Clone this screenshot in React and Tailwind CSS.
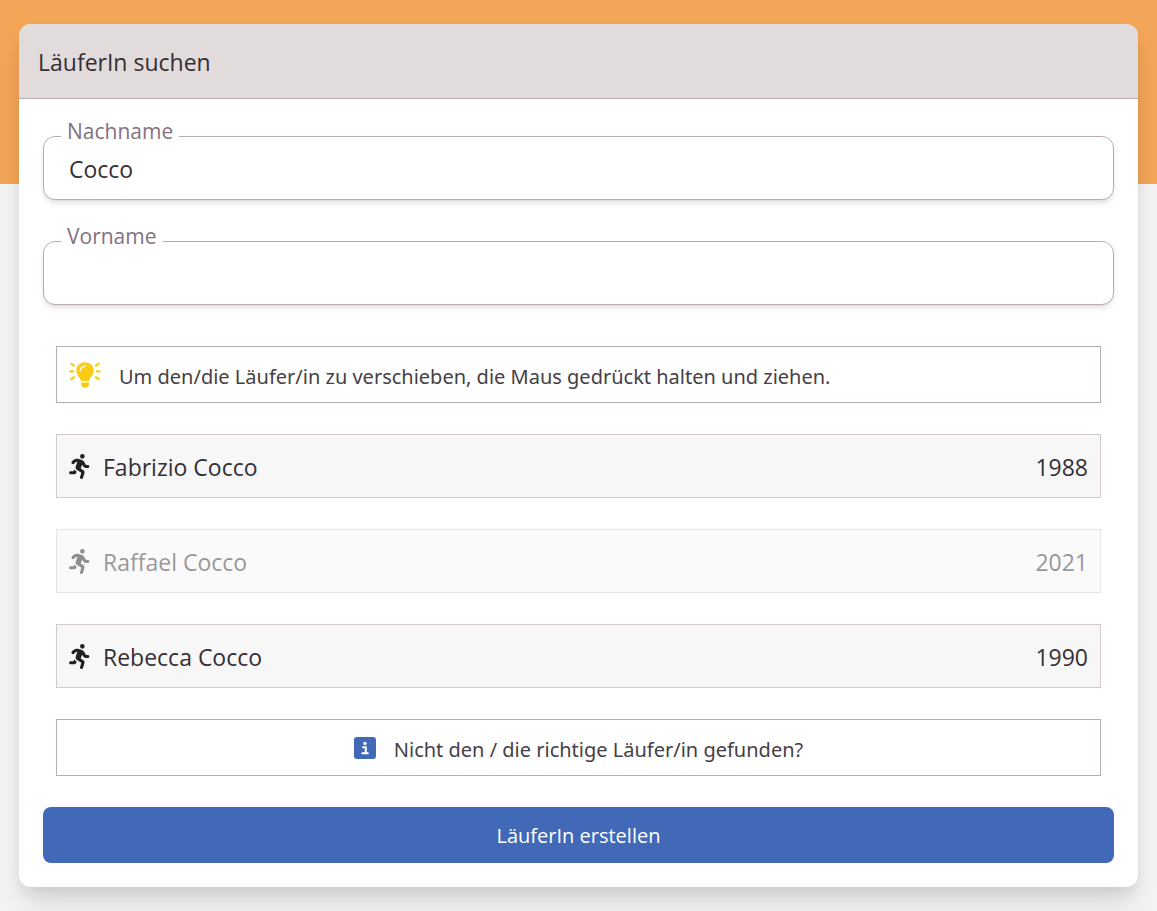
import { useState } from "react";
import { FaPersonRunning } from "react-icons/fa6";

const runners = [
  { name: "Fabrizio Cocco", year: 1988, disabled: false },
  { name: "Raffael Cocco", year: 2021, disabled: true },
  { name: "Rebecca Cocco", year: 1990, disabled: false },
];

function BulbIcon() {
  return (
    <svg viewBox="0 0 640 512" className="h-[26px] w-8 shrink-0" aria-hidden="true">
      <path
        fill="#facc15"
        d="M320 0C217 0 144 76 144 168c0 50 20 88 48 118 22 24 42 60 46 90h164c4-30 24-66 46-90 28-30 48-68 48-118C496 76 423 0 320 0z"
      />
      <path fill="none" stroke="#fff" strokeWidth="30" strokeLinecap="round" d="M226 172c0-52 42-92 94-92" />
      <path fill="#facc15" d="M240 408h160v28c0 44-34 76-80 76s-80-32-80-76z" />
      <path
        fill="none"
        stroke="#facc15"
        strokeWidth="46"
        strokeLinecap="round"
        d="M26 184h58M556 184h58M48 32l52 36M592 32l-52 36M48 336l52-36M592 336l-52-36"
      />
    </svg>
  );
}

function InfoIcon() {
  return (
    <svg viewBox="0 0 22 22" className="size-[22px] shrink-0" aria-hidden="true">
      <rect width="22" height="22" rx="3" fill="#4169b8" />
      <circle cx="11" cy="6.4" r="1.7" fill="#fff" />
      <path fill="none" stroke="#fff" strokeWidth="2" d="M8.2 10.2h3.6v5.6M7.6 16.2h7" />
    </svg>
  );
}

function Field({ id, label, initial }) {
  const [value, setValue] = useState(initial);
  return (
    <div className="relative">
      <input
        id={id}
        value={value}
        onChange={(e) => setValue(e.target.value)}
        className="block h-16 w-full rounded-xl border border-[#b9abb5] bg-white px-[25px] pt-[2px] text-[23px] text-[#352f35] shadow-md outline-none"
      />
      <label
        htmlFor={id}
        className="absolute -top-5 left-[18px] bg-white px-[6px] text-[21px] leading-[30px] text-[#84707f]"
      >
        {label}
      </label>
    </div>
  );
}

function Runner({ name, year, disabled }) {
  return (
    <li
      className={
        "flex h-16 items-center border border-[#d2c8cf] bg-[#f7f7f7] px-3 text-[23px] text-[#352f35]" +
        (disabled ? " opacity-50" : "")
      }
    >
      <FaPersonRunning className="h-[25px] w-[22px] shrink-0 text-[#231f23]" />
      <span className="ml-3 grow pt-[2px]">{name}</span>
      <span className="pt-[2px]">{year}</span>
    </li>
  );
}

export default function App() {
  return (
    <main className="min-h-screen bg-[linear-gradient(#f4a658_184px,#f4f4f4_184px)] px-[19px] py-6 font-['Open_Sans',sans-serif]">
      <section className="overflow-hidden rounded-xl bg-white shadow-[0_20px_30px_-3px_rgba(0,0,0,0.1),0_8px_16px_-4px_rgba(0,0,0,0.1)]">
        <header className="border-b border-[#b9abb5] bg-[#e1dbdb] px-[19px] pt-5 pb-[18px]">
          <h1 className="text-[23px] leading-9 text-[#352f35]">LäuferIn suchen</h1>
        </header>
        <form className="px-6 pt-[37px] pb-6" onSubmit={(e) => e.preventDefault()}>
          <div className="flex flex-col gap-[41px]">
            <Field id="nachname" label="Nachname" initial="Cocco" />
            <Field id="vorname" label="Vorname" initial="" />
          </div>
          <div className="mt-[41px] flex flex-col gap-[31px] px-[13px]">
            <div className="flex h-[57px] items-center gap-[18px] border border-[#b9abb5] px-3">
              <BulbIcon />
              <p className="pt-1 font-['Noto_Sans',sans-serif] text-[20px] text-[#454045]">
                Um den/die Läufer/in zu verschieben, die Maus gedrückt halten und ziehen.
              </p>
            </div>
            <ul className="flex flex-col gap-[31px]">
              {runners.map((r) => (
                <Runner key={r.name} {...r} />
              ))}
            </ul>
            <div className="flex h-[57px] items-center justify-center gap-[18px] border border-[#b9abb5] px-3">
              <InfoIcon />
              <p className="pt-1 font-['Noto_Sans',sans-serif] text-[20px] text-[#454045]">
                Nicht den / die richtige Läufer/in gefunden?
              </p>
            </div>
          </div>
          <button
            type="submit"
            className="mt-[31px] h-14 w-full rounded-lg bg-[#4169b8] pt-[2px] text-[20px] font-medium text-white"
          >
            LäuferIn erstellen
          </button>
        </form>
      </section>
    </main>
  );
}
